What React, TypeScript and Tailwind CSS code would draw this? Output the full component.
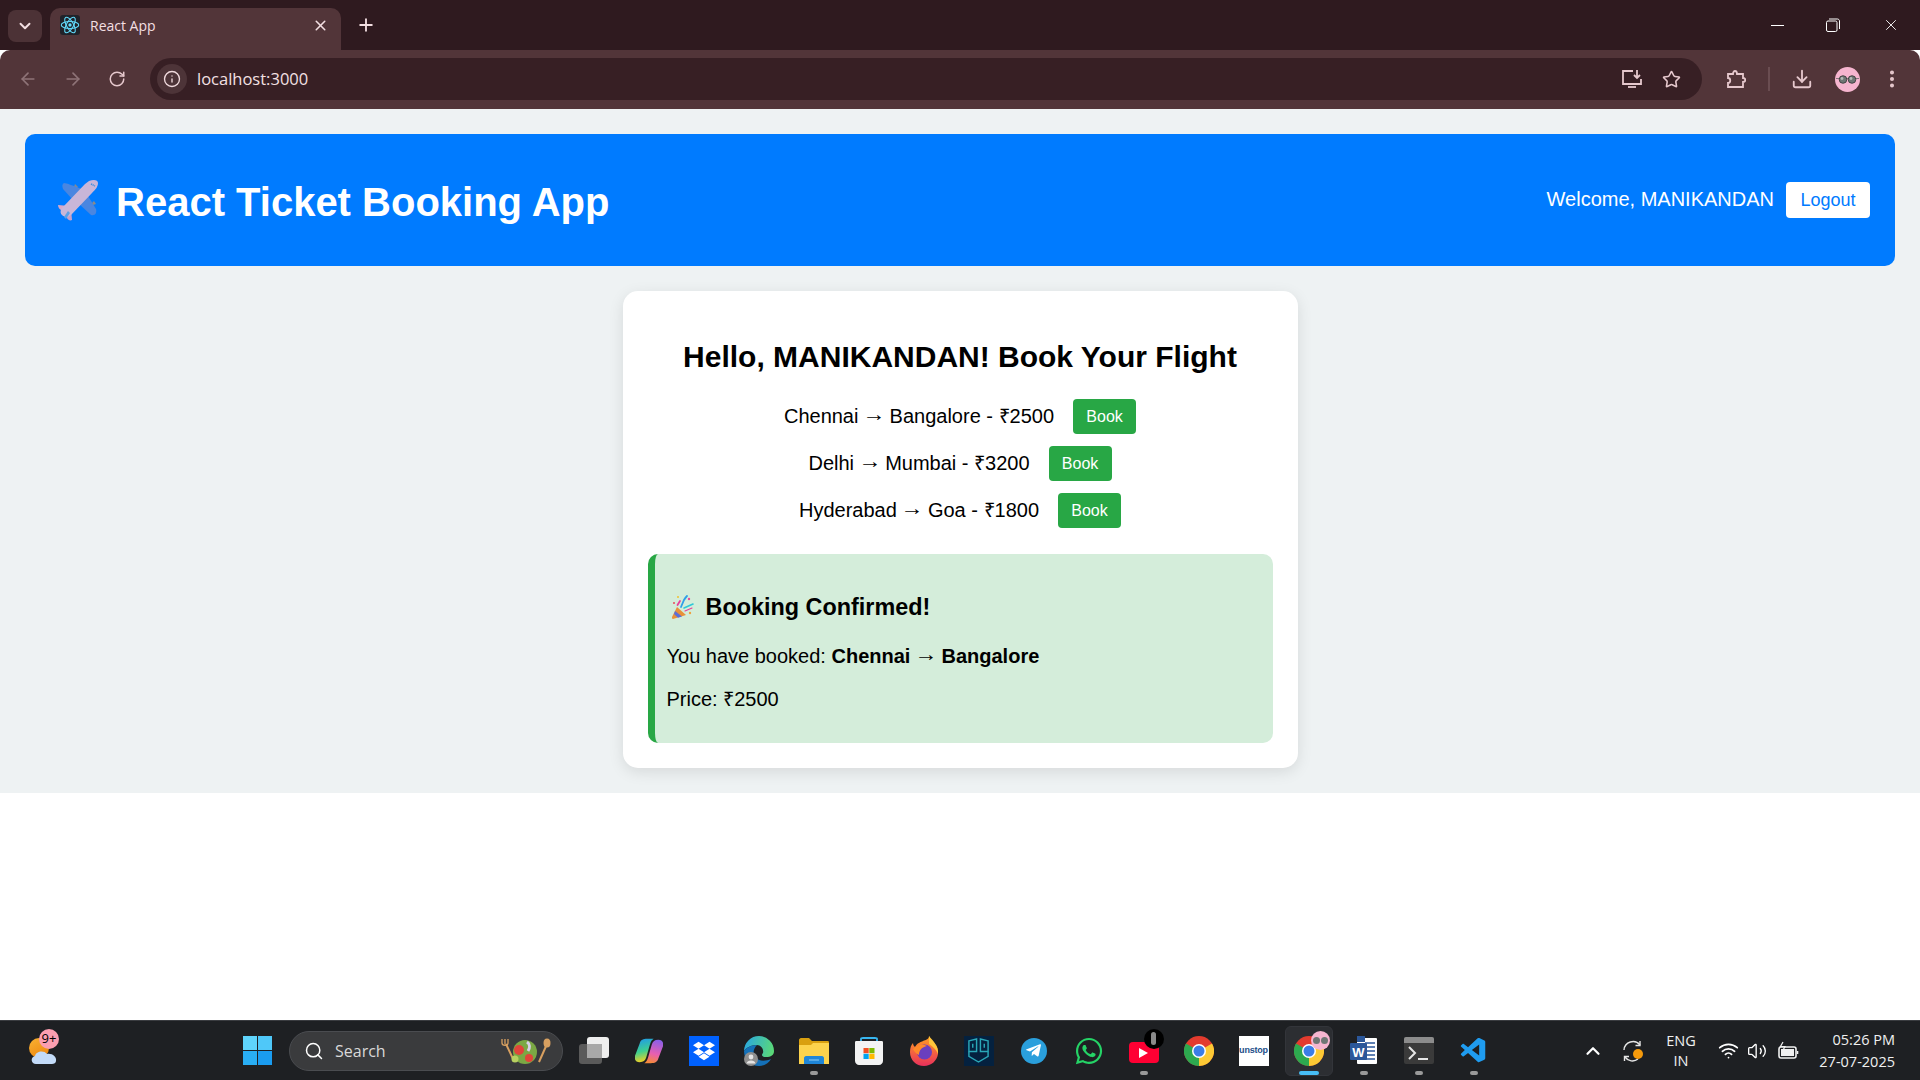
import { ArrowLeft, ArrowRight, ChevronDown, ChevronUp, Download, EllipsisVertical, Info, Plus, RotateCw, Search, Star, Volume2, Wifi, X } from "lucide-react";
import type { ReactNode } from "react";
import { FaDropbox, FaTelegramPlane, FaWhatsapp } from "react-icons/fa";
import { VscVscode } from "react-icons/vsc";

const flights = [
  { from: "Chennai", to: "Bangalore", price: "₹2500" },
  { from: "Delhi", to: "Mumbai", price: "₹3200" },
  { from: "Hyderabad", to: "Goa", price: "₹1800" }
];

function Arrow() {
  return <span className="inline-block -translate-y-[2px] scale-x-[1.15] font-normal">→</span>;
}

function ReactLogo() {
  return (
    <div className="flex h-5 w-5 items-center justify-center rounded-[3px] bg-[#20232a]">
      <svg viewBox="0 0 24 24" className="h-5 w-5" fill="none" stroke="#61dafb" strokeWidth="1.3">
        <ellipse cx="12" cy="12" rx="10.5" ry="4.2" />
        <ellipse cx="12" cy="12" rx="10.5" ry="4.2" transform="rotate(60 12 12)" />
        <ellipse cx="12" cy="12" rx="10.5" ry="4.2" transform="rotate(120 12 12)" />
        <circle cx="12" cy="12" r="2" fill="#61dafb" stroke="none" />
      </svg>
    </div>
  );
}

function Sunglasses() {
  return (
    <div className="flex h-[25px] w-[25px] items-center justify-center rounded-full bg-[#f6b5cf]">
      <svg viewBox="0 0 25 25" className="h-[25px] w-[25px]">
        <path d="M1 11.5h23" stroke="#666" strokeWidth="0.8" />
        <circle cx="8" cy="12.5" r="3.8" fill="#6f7674" stroke="#333" strokeWidth="0.8" />
        <circle cx="17" cy="12.5" r="3.8" fill="#6f7674" stroke="#333" strokeWidth="0.8" />
        <circle cx="7" cy="11.5" r="1.4" fill="#b4bab7" />
        <circle cx="16" cy="11.5" r="1.4" fill="#b4bab7" />
      </svg>
    </div>
  );
}

function Plane() {
  return (
    <svg viewBox="5 6 44 44" className="h-[44px] w-[44px] shrink-0">
      <path d="M25 12 L28 15 L26 17 L24 15 Z" fill="#8a8a8a" />
      <path d="M44 29 L46 32 L43 33 L42 31 Z" fill="#8a8a8a" />
      <path d="M14 11 C16 11 24 14 32 17 L23 28 L13 17 C12 14 12 12 14 11 Z" fill="#4a86e0" />
      <path d="M35 19 L46 37 C47 41 45 44 41 43 L27 30 Z" fill="#4a86e0" />
      <path d="M19 34 L8 33 C8 36 10 38 13 39 Z" fill="#d8a8c8" />
      <path d="M21 37 L22 48 C20 49 18 48 17 46 L15 39 Z" fill="#c8a0c8" />
      <path d="M39 9 C44 7 48 8 48 11 C48 15 45 18 42 21 L21 43 C17 46 14 45 12 43 C10 41 10 38 13 35 L35 12 Z" fill="#c9b6d8" />
      <path d="M14 45 L18 39 L20 41 L16 47 Z" fill="#5aa0e8" />
      <path d="M41 12 L45 14" stroke="#3f8fe0" strokeWidth="1.6" strokeDasharray="1.2 0.6" />
    </svg>
  );
}

function Party() {
  return (
    <svg viewBox="10 4 26 26" className="h-[26px] w-[26px] shrink-0">
      <path d="M17 17 L26 25 L13 29 C12 29 12 28 12 27 Z" fill="#e8913a" />
      <path d="M15 21 L22 26.5 L18 27.8 L14 24 Z" fill="#5b6fd8" />
      <path d="M17.5 15 L20 11" stroke="#e83f9a" strokeWidth="1.8" strokeLinecap="round" />
      <path d="M21 17 L24 10 C25 8 26 7 27 6" stroke="#2f9fe8" strokeWidth="1.8" fill="none" strokeLinecap="round" />
      <path d="M24 18 L33 14" stroke="#2fc8d8" strokeWidth="1.6" strokeLinecap="round" />
      <path d="M25 21 L32 18" stroke="#e83f9a" strokeWidth="1.2" strokeLinecap="round" />
      <circle cx="30" cy="23" r="1.2" fill="#f0a040" />
      <circle cx="29" cy="9" r="1.2" fill="#e84a9a" />
      <circle cx="18" cy="7" r="1" fill="#f0c030" />
      <circle cx="14" cy="13" r="1" fill="#e84a5a" />
    </svg>
  );
}

function Slot({ children, dot, active }: { children: ReactNode; dot?: boolean; active?: boolean }) {
  return (
    <div className="relative flex h-[60px] w-[55px] shrink-0 items-center justify-center">
      {active ? <div className="absolute top-[5px] h-[50px] w-[48px] rounded-md border border-[#33353a] bg-[#2c2e32]" /> : null}
      <div className="relative flex h-[30px] w-[30px] items-center justify-center">{children}</div>
      {dot ? <div className="absolute bottom-[6px] h-[4px] w-[8px] rounded-full bg-[#9a9a9a]" /> : null}
      {active ? <div className="absolute bottom-[6px] h-[4px] w-[20px] rounded-full bg-[#47bdf5]" /> : null}
    </div>
  );
}

function ChromeIcon() {
  return (
    <svg viewBox="0 0 30 30" className="h-[30px] w-[30px]">
      <circle cx="15" cy="15" r="15" fill="#e33b2e" />
      <path d="M15 15 L2 7.5 A15 15 0 0 0 15 30 Z" fill="#2da94f" />
      <path d="M15 15 L28 7.5 A15 15 0 0 1 15 30 Z" fill="#fcc934" />
      <circle cx="15" cy="15" r="7" fill="#fff" />
      <circle cx="15" cy="15" r="5.5" fill="#3b7de8" />
    </svg>
  );
}

function Taskbar() {
  return (
    <div className="flex h-[60px] items-center border-t border-[#3a3c40] bg-[#1e2023] text-white">
      <div className="relative flex h-[60px] w-[230px] shrink-0 items-center pl-[29px]">
        <svg viewBox="0 0 30 30" className="h-[30px] w-[30px]">
          <defs>
            <linearGradient id="sun" x1="0" y1="0" x2="0.6" y2="1">
              <stop offset="0" stopColor="#f9b233" />
              <stop offset="1" stopColor="#ee8a12" />
            </linearGradient>
          </defs>
          <circle cx="10" cy="12" r="10" fill="url(#sun)" />
          <path d="M7 28 C2 28 1 21 6 20 C7 15 15 14 18 18 C23 17 28 21 27 25 C27 27 25 28 23 28 Z" fill="#c3dbf8" />
        </svg>
        <div className="absolute left-[39px] top-[8px] flex h-[20px] w-[20px] items-center justify-center rounded-full bg-[#fb9eb0] font-['Open_Sans',sans-serif] text-[13px] text-black">
          9+
        </div>
      </div>

      <Slot>
        <div className="grid h-[29px] w-[29px] grid-cols-2 gap-[1px]">
          <div className="bg-[#5fd4fb]" />
          <div className="bg-[#4fc8f9]" />
          <div className="bg-[#29aef4]" />
          <div className="bg-[#1a9cf0]" />
        </div>
      </Slot>

      <div className="ml-[4px] mr-[3px] flex h-[40px] w-[274px] shrink-0 items-center rounded-full border border-[#4a4c50] bg-[#3a3b3d] pl-[14px] pr-[11px]">
        <Search className="h-[20px] w-[20px] text-white" strokeWidth={1.8} />
        <span className="ml-[11px] font-['Open_Sans',sans-serif] text-[16px] text-[#d8d8d8]">Search</span>
        <svg viewBox="0 0 50 26" className="ml-auto h-[26px] w-[50px]">
          <path d="M5 6 L13 23" stroke="#d8a060" strokeWidth="2" />
          <path d="M1 1 V5 C1 8 7 8 7 5 V1 M4 1 V6" stroke="#d8a060" strokeWidth="1.3" fill="none" />
          <path d="M46 6 L38 24" stroke="#d8a060" strokeWidth="2" />
          <ellipse cx="46" cy="5" rx="3.5" ry="4.5" fill="#d8a060" />
          <circle cx="24" cy="14" r="12" fill="#7ba844" />
          <circle cx="18" cy="12" r="5" fill="#e0453a" />
          <circle cx="28" cy="20" r="4" fill="#e0453a" />
          <path d="M26 4 C29 6 29 10 27 13" stroke="#d8d0e8" strokeWidth="3" fill="none" />
          <circle cx="14" cy="21" r="3.5" fill="#b8d060" />
        </svg>
      </div>

      <Slot>
        <div className="relative h-[30px] w-[30px]">
          <div className="absolute bottom-[2px] left-0 h-[20px] w-[23px] rounded-[3px] bg-[#5a5a5a]" />
          <div className="absolute right-0 top-[1px] h-[21px] w-[22px] rounded-[3px] bg-[#eeeeee]" />
          <div className="absolute left-[8px] top-[8px] h-[14px] w-[15px] bg-[#a8a8a8]" />
        </div>
      </Slot>
      <Slot>
        <svg viewBox="0 0 30 30" className="h-[28px] w-[28px]">
          <defs>
            <linearGradient id="copA" x1="0.2" y1="0" x2="0.4" y2="1">
              <stop offset="0" stopColor="#1f9be8" />
              <stop offset="0.55" stopColor="#3fd08f" />
              <stop offset="1" stopColor="#f5d020" />
            </linearGradient>
            <linearGradient id="copB" x1="0.6" y1="0" x2="0.4" y2="1">
              <stop offset="0" stopColor="#8a5fe8" />
              <stop offset="0.6" stopColor="#e85fb0" />
              <stop offset="1" stopColor="#f58a3a" />
            </linearGradient>
          </defs>
          <path d="M0 20 L5 7 C6 3 9 2 13 2 H20 C18 3 17 5 16 8 L12 22 C11 25 9 27 5 27 C1 27 -1 24 0 20 Z" fill="url(#copA)" />
          <path d="M30 10 L25 23 C24 27 21 28 17 28 H10 C12 27 13 25 14 22 L18 8 C19 5 21 3 25 3 C29 3 31 6 30 10 Z" fill="url(#copB)" />
        </svg>
      </Slot>
      <Slot>
        <div className="flex h-[30px] w-[30px] items-center justify-center bg-[#0061fe]">
          <FaDropbox className="h-[22px] w-[22px] text-white" />
        </div>
      </Slot>
      <Slot>
        <svg viewBox="0 0 30 30" className="h-[30px] w-[30px]">
          <defs>
            <linearGradient id="edgeTop" x1="0" y1="0.3" x2="1" y2="0.5">
              <stop offset="0" stopColor="#2aa8e0" />
              <stop offset="1" stopColor="#5ad878" />
            </linearGradient>
          </defs>
          <path d="M0 15 A15 15 0 0 1 30 15 C30 19 27 21 22 21 C18 21 17 19 19 17 C20 13 17 9 13 9 C7 9 2 12 0 15 Z" fill="url(#edgeTop)" />
          <path d="M0 15 C0 24 7 30 15 30 C20 30 25 27 27 23 C22 25 15 26 11 21 C8 17 10 12 13 9 C7 9 2 12 0 15 Z" fill="#1470b8" />
          <circle cx="7" cy="23" r="7" fill="#8f8f8f" />
          <circle cx="7" cy="21" r="2.4" fill="#e4e4e4" />
          <path d="M2.5 27.5 C3 23.5 11 23.5 11.5 27.5 Z" fill="#e4e4e4" />
        </svg>
      </Slot>
      <Slot dot>
        <svg viewBox="0 0 30 30" className="h-[30px] w-[30px]">
          <path d="M0 4 C0 3 1 2 2 2 H10 L13 5 H29 C30 5 30 6 30 7 V12 H0 Z" fill="#d9a010" />
          <path d="M0 9 L12 9 L14 7 H30 V28 H0 Z" fill="#fcd34d" />
          <path d="M5 22 C5 21 6 20 7 20 H23 C24 20 25 21 25 22 V28 H5 Z" fill="#1f86d8" />
          <path d="M10 24 H20" stroke="#7ec3f2" strokeWidth="1.2" />
        </svg>
      </Slot>
      <Slot>
        <svg viewBox="0 0 30 30" className="h-[30px] w-[30px]">
          <path d="M7 7 V3 C7 2 8 2 9 2 H21 C22 2 23 2 23 3 V7" fill="none" stroke="#38b6f0" strokeWidth="1.8" />
          <path d="M1 7 C1 6 1 5 2 5 H28 C29 5 29 6 29 7 V25 C29 27 27 29 25 29 H5 C3 29 1 27 1 25 Z" fill="#f3f3f3" />
          <rect x="9.5" y="12" width="5.2" height="5.2" fill="#f25022" />
          <rect x="15.3" y="12" width="5.2" height="5.2" fill="#7fba00" />
          <rect x="9.5" y="17.8" width="5.2" height="5.2" fill="#00a4ef" />
          <rect x="15.3" y="17.8" width="5.2" height="5.2" fill="#ffb900" />
        </svg>
      </Slot>
      <Slot>
        <svg viewBox="0 0 30 30" className="h-[30px] w-[30px]">
          <defs>
            <linearGradient id="fox" x1="0.5" y1="0" x2="0.5" y2="1">
              <stop offset="0" stopColor="#ffa020" />
              <stop offset="1" stopColor="#e8305c" />
            </linearGradient>
          </defs>
          <path d="M20 0 C22 6 30 8 29 18 C28 25 22 30 15 30 C7 30 1 24 1 16 C1 12 2 9 4 7 C4 9 5 10 6 11 C8 7 12 6 14 5 C17 4 20 3 20 0 Z" fill="url(#fox)" />
          <path d="M20 0 C24 5 30 10 29 18 C27 13 23 10 20 8 Z" fill="#ffc53a" />
          <circle cx="15.5" cy="16" r="7.5" fill="#6a3fbf" />
          <path d="M4 13 C9 8 14 8 18 10 C13 11 10 14 10 19 C8 18 5 16 4 13 Z" fill="#ff8a2a" />
        </svg>
      </Slot>
      <Slot>
        <div className="flex h-[30px] w-[30px] items-center justify-center bg-[#04213f]">
          <svg viewBox="0 0 24 26" className="h-[25px] w-[23px]" fill="none" stroke="#2aa7b8" strokeWidth="1.5">
            <path d="M2 3 L10 1 V14 H2 Z" />
            <path d="M22 3 L14 1 V14 H22 Z" />
            <path d="M2 14 V19 L12 25 L22 19 V14" />
            <path d="M6 6 V10 M18 6 V10" />
          </svg>
        </div>
      </Slot>
      <Slot>
        <div className="flex h-[26px] w-[26px] items-center justify-center rounded-full bg-[#2a9fdc]">
          <FaTelegramPlane className="h-[17px] w-[17px] text-white" />
        </div>
      </Slot>
      <Slot>
        <FaWhatsapp className="h-[30px] w-[30px] text-[#25d366]" />
      </Slot>
      <Slot dot>
        <div className="flex h-[21px] w-[30px] translate-y-[2px] items-center justify-center rounded-[4px] bg-[#ff0033]">
          <div className="h-0 w-0 border-y-[5px] border-l-[9px] border-y-transparent border-l-white" />
        </div>
        <div className="absolute left-[15px] top-[-7px] flex h-[20px] w-[20px] items-center justify-center rounded-full bg-black">
          <div className="h-[13px] w-[5px] rounded-full bg-[#8a8a8a]" />
        </div>
      </Slot>
      <Slot>
        <ChromeIcon />
      </Slot>
      <Slot>
        <div className="flex h-[30px] w-[30px] items-center justify-center bg-white font-['Liberation_Sans',sans-serif] text-[9px] font-bold tracking-[-0.2px] text-[#1d4e89]">
          unstop
        </div>
      </Slot>
      <Slot active>
        <ChromeIcon />
        <div className="absolute left-[17px] top-[-5px] flex h-[19px] w-[19px] items-center justify-center rounded-full bg-[#f6b5cf]">
          <div className="flex gap-[1px]">
            <div className="h-[7px] w-[7px] rounded-full bg-[#6f7674]" />
            <div className="h-[7px] w-[7px] rounded-full bg-[#6f7674]" />
          </div>
        </div>
      </Slot>
      <Slot dot>
        <svg viewBox="0 0 30 30" className="h-[30px] w-[30px]">
          <rect x="8" y="2" width="20" height="26" rx="1" fill="#fff" />
          <path d="M16 7h10M16 11h10M16 15h10M16 19h10M16 23h10" stroke="#2b579a" strokeWidth="1.6" />
          <rect x="1" y="7" width="17" height="17" rx="1" fill="#2b579a" />
          <path d="M8 0 H16 V6 H8 Z" fill="#2b579a" />
          <text x="9.5" y="20.5" textAnchor="middle" fill="#fff" fontSize="13" fontWeight="700" fontFamily="Liberation Sans, sans-serif">W</text>
        </svg>
      </Slot>
      <Slot dot>
        <div className="h-[27px] w-[30px] overflow-hidden rounded-[2px] bg-[#3a3a3a]">
          <div className="h-[6px] bg-[#8c8c8c]" />
          <svg viewBox="0 0 30 21" className="h-[21px] w-[30px]" fill="none" stroke="#e6e6e6" strokeWidth="2">
            <path d="M5 4 L11 10 L5 16" />
            <path d="M14 16 H24" />
          </svg>
        </div>
      </Slot>
      <Slot dot>
        <VscVscode className="h-[30px] w-[30px] text-[#1f9cf0]" />
      </Slot>

      <div className="ml-auto flex h-[60px] items-center pr-[25px] font-['Open_Sans',sans-serif] text-[#f0f0f0]">
        <div className="flex w-[40px] justify-center">
          <ChevronUp className="h-[22px] w-[22px] text-white" strokeWidth={2.4} />
        </div>
        <div className="flex w-[40px] justify-center">
          <svg viewBox="0 0 24 24" className="h-[24px] w-[24px]" fill="none" stroke="#e6e6e6" strokeWidth="1.4">
            <path d="M3 11 A9 9 0 0 1 19 6" />
            <path d="M19 2 V6.5 H14.5" />
            <path d="M17 20 A9 9 0 0 1 4 18" />
            <path d="M3.5 22 V17.5 H8" />
            <circle cx="17" cy="15" r="5" fill="#f59a0c" stroke="none" />
          </svg>
        </div>
        <div className="flex w-[56px] flex-col items-center text-[14.5px] leading-[20px]">
          <span>ENG</span>
          <span>IN</span>
        </div>
        <div className="flex w-[38px] justify-center">
          <Wifi className="h-[21px] w-[21px] text-white" strokeWidth={2} />
        </div>
        <div className="flex w-[20px] justify-center">
          <Volume2 className="h-[20px] w-[20px] shrink-0 text-white" strokeWidth={1.6} />
        </div>
        <div className="flex w-[42px] justify-center">
          <svg viewBox="0 0 22 20" className="h-[20px] w-[22px]" fill="none" stroke="#f0f0f0" strokeWidth="1.6">
            <rect x="2" y="6" width="17" height="11" rx="2" />
            <rect x="4" y="8" width="13" height="7" fill="#f0f0f0" stroke="none" />
            <path d="M20.5 10v3" />
            <path d="M6 1 L3.5 5.5 H8 L5.5 10" strokeWidth="1.2" stroke="#f0f0f0" />
          </svg>
        </div>
        <div className="flex w-[86px] flex-col items-end text-[14.5px] leading-[22px]">
          <span>05:26 PM</span>
          <span>27-07-2025</span>
        </div>
      </div>
    </div>
  );
}

function BrowserChrome() {
  return (
    <div className="font-['Open_Sans',sans-serif]">
      <div className="flex h-[50px] bg-[#2f1a1f] pl-[8px] text-[#f3dfe2]">
        <div className="mt-[10px] flex h-[32px] w-[34px] items-center justify-center rounded-lg bg-[#4c3236]">
          <ChevronDown className="h-[18px] w-[18px]" strokeWidth={2.6} />
        </div>
        <div className="ml-[8px] mt-[8px] flex h-[42px] w-[291px] items-center rounded-t-[10px] bg-[#523539] pb-[8px] pl-[10px] pr-[12px]">
          <ReactLogo />
          <span className="ml-[10px] text-[14px]">React App</span>
          <X className="ml-auto h-[17px] w-[17px]" strokeWidth={2.2} />
        </div>
        <Plus className="ml-[15px] mt-[15px] h-[20px] w-[20px]" strokeWidth={2.2} />
        <div className="ml-auto flex h-[50px] items-start pr-[1px] pt-[16px] text-white">
          <div className="flex h-[18px] w-[56px] items-center justify-center">
            <div className="h-[1px] w-[13px] bg-white" />
          </div>
          <div className="mr-[2px] flex h-[18px] w-[56px] items-center justify-center">
            <svg viewBox="0 0 14 14" className="h-[14px] w-[14px]" fill="none" stroke="#fff" strokeWidth="1">
              <rect x="0.5" y="3" width="10.5" height="10.5" rx="1.5" />
              <path d="M3 1 H11.5 C12.5 1 13.5 2 13.5 3 V11" />
            </svg>
          </div>
          <div className="flex h-[18px] w-[56px] items-center justify-center">
            <X className="h-[18px] w-[18px]" strokeWidth={1.2} />
          </div>
        </div>
      </div>
      <div className="flex h-[59px] items-center rounded-t-[10px] bg-[#523539] pb-[1px] pl-[18px] text-[#e6c8cd]">
        <ArrowLeft className="h-[20px] w-[20px] text-[#8e7377]" strokeWidth={2} />
        <ArrowRight className="ml-[25px] h-[20px] w-[20px] text-[#8e7377]" strokeWidth={2} />
        <RotateCw className="ml-[25px] h-[18px] w-[18px]" strokeWidth={2} />
        <div className="ml-[24px] flex h-[42px] w-[1552px] shrink-0 items-center rounded-full bg-[#371f24] pl-[7px] pr-[14px]">
          <div className="flex h-[30px] w-[30px] items-center justify-center rounded-full bg-[#4d3438]">
            <Info className="h-[18px] w-[18px] text-[#f0dadd]" strokeWidth={1.8} />
          </div>
          <span className="ml-[10px] text-[16.5px] text-[#f3e0e3]">localhost:3000</span>
          <svg viewBox="0 0 22 20" className="ml-auto h-[20px] w-[22px]" fill="none" stroke="#e6c8cd" strokeWidth="1.8">
            <path d="M12 2 H2 V15 H20 V10" />
            <path d="M7 18 H15" />
            <path d="M16 1 V9 M13 6 L16 9 L19 6" />
          </svg>
          <Star className="ml-[19px] mr-[7px] h-[19px] w-[19px]" strokeWidth={2} />
        </div>
        <svg viewBox="0 0 20 20" className="ml-[24px] h-[20px] w-[20px] shrink-0" fill="none" stroke="#e6c8cd" strokeWidth="1.8">
          <path d="M2 5 H7 C7 1 11 1 11 5 H17 V9 C20 9 20 13 17 13 V18 H2 V14 C5 14 5 9 2 9 Z" />
        </svg>
        <div className="ml-[22px] h-[24px] w-[2px] shrink-0 bg-[#6a4d51]" />
        <Download className="ml-[21px] h-[22px] w-[22px] shrink-0" strokeWidth={2} />
        <div className="ml-[22px] shrink-0">
          <Sunglasses />
        </div>
        <EllipsisVertical className="ml-[21px] h-[22px] w-[22px] shrink-0" strokeWidth={2.4} />
      </div>
    </div>
  );
}

export default function App() {
  return (
    <div className="flex h-screen w-full flex-col overflow-hidden bg-white font-['Liberation_Sans',Arial,sans-serif] text-black">
      <BrowserChrome />
      <main className="flex-1">
        <div className="bg-[#eef2f3] p-[25px]">
          <header className="flex h-[132px] items-center justify-between rounded-[10px] bg-[#007bff] pl-[30px] pr-[25px] text-white">
            <h1 className="flex items-center text-[40px] font-bold">
              <Plane />
              <span className="ml-[17px] pt-[4px]">React Ticket Booking App</span>
            </h1>
            <div className="flex items-center">
              <span className="pb-[2px] text-[20px]">Welcome, MANIKANDAN</span>
              <button className="ml-[12px] h-[36px] w-[84px] rounded-[4px] bg-white text-[18px] text-[#007bff]" type="button">
                Logout
              </button>
            </div>
          </header>

          <section className="mx-auto mt-[25px] flex w-[675px] flex-col rounded-[15px] bg-white p-[25px] shadow-[0_4px_15px_rgba(0,0,0,0.1)]">
            <h2 className="mt-[23px] text-center text-[30px] font-bold leading-[35px]">Hello, MANIKANDAN! Book Your Flight</h2>
            <ul className="mt-[25px] flex flex-col gap-[12px]">
              {flights.map((flight) => (
                <li key={flight.from} className="flex h-[35px] items-center justify-center text-[20px]">
                  <span className="pb-[2px]">
                    {flight.from} <Arrow /> {flight.to} - {flight.price}
                  </span>
                  <button className="ml-[19px] h-[35px] w-[63px] rounded-[4px] bg-[#28a745] text-[16px] text-white" type="button">
                    Book
                  </button>
                </li>
              ))}
            </ul>
            <div className="mt-[26px] flex h-[189px] flex-col rounded-[10px] border-l-[7px] border-[#28a745] bg-[#d4edda] pl-[12px]">
              <h3 className="mt-[39px] flex items-center pl-[3px] text-[23.4px] font-bold leading-[28px]">
                <Party />
                <span className="ml-[10px]">Booking Confirmed!</span>
              </h3>
              <p className="mt-[24px] text-[20px] leading-[23px]">
                You have booked: <strong>Chennai <Arrow /> Bangalore</strong>
              </p>
              <p className="mt-[20px] text-[20px] leading-[23px]">Price: ₹2500</p>
            </div>
          </section>
        </div>
      </main>
      <Taskbar />
    </div>
  );
}
